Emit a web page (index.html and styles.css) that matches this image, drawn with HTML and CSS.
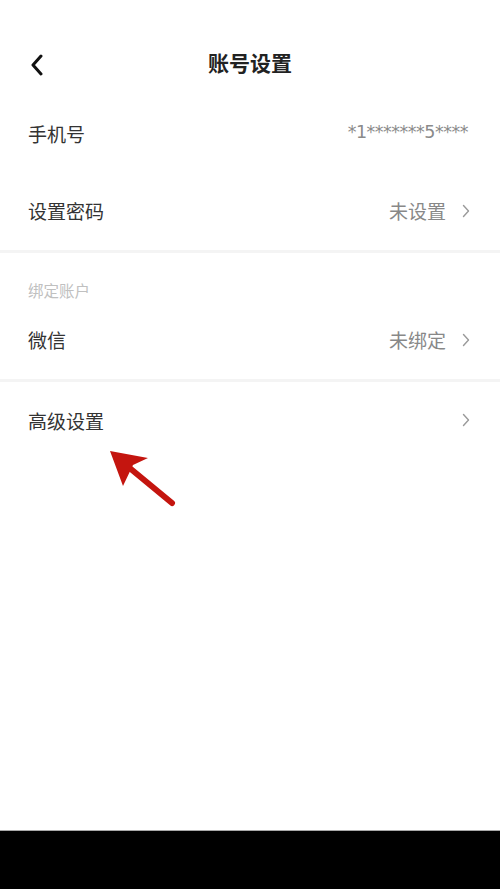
FILE: index.html
```html
<!DOCTYPE html>
<html lang="zh-CN">
<head>
<meta charset="utf-8">
<title>账号设置</title>
<link rel="stylesheet" href="styles.css">
</head>
<body>
<div class="page">
  <main class="content">
    <header class="header">
      <span class="back">
        <svg width="14" height="22" viewBox="0 0 14 22"><path d="M11 2 L3 11 L11 20" fill="none" stroke="#111" stroke-width="3" stroke-linecap="round" stroke-linejoin="round"/></svg>
      </span>
      <h1 class="title">账号设置</h1>
    </header>
    <div class="row">
      <span class="label">手机号</span>
      <span class="value phone">*1*******5****</span>
    </div>
    <div class="row row-b">
      <span class="label">设置密码</span>
      <span class="right"><span class="value">未设置</span><svg class="chev" width="8" height="14" viewBox="0 0 8 14"><path d="M1.5 1.5 L6.5 7 L1.5 12.5" fill="none" stroke="#9a9a9a" stroke-width="1.4" stroke-linecap="round" stroke-linejoin="round"/></svg></span>
    </div>
    <div class="divider"></div>
    <div class="section">绑定账户</div>
    <div class="row row-c">
      <span class="label">微信</span>
      <span class="right"><span class="value">未绑定</span><svg class="chev" width="8" height="14" viewBox="0 0 8 14"><path d="M1.5 1.5 L6.5 7 L1.5 12.5" fill="none" stroke="#9a9a9a" stroke-width="1.4" stroke-linecap="round" stroke-linejoin="round"/></svg></span>
    </div>
    <div class="divider"></div>
    <div class="row">
      <span class="label">高级设置</span>
      <span class="right"><svg class="chev" width="8" height="14" viewBox="0 0 8 14"><path d="M1.5 1.5 L6.5 7 L1.5 12.5" fill="none" stroke="#9a9a9a" stroke-width="1.4" stroke-linecap="round" stroke-linejoin="round"/></svg></span>
    </div>
    <svg class="arrow" width="80" height="70" viewBox="0 0 80 70">
      <path d="M62 60 L16 22" stroke="#c4150f" stroke-width="6" stroke-linecap="round" fill="none"/>
      <path d="M0 8 L38 15 L23 22 L13 43 Z" fill="#c4150f"/>
    </svg>
  </main>
  <footer class="bottom"></footer>
</div>
</body>
</html>
```
FILE: styles.css
```css
* { box-sizing: border-box; }
html, body { margin: 0; padding: 0; }
body {
  background: #000;
  font-family: "Noto Sans CJK SC", "Noto Sans", sans-serif;
}
.page {
  display: flex;
  flex-direction: column;
  height: 889px;
}
.content {
  position: relative;
  flex: 1;
  background: #fff;
}
.bottom {
  height: 59px;
  background: #000;
  border-top: 1px solid #a8a8a8;
}
.header {
  margin-top: 33px;
  height: 62px;
  padding-bottom: 4px;
  display: flex;
  align-items: center;
  justify-content: center;
  position: relative;
}
.back {
  position: absolute;
  left: 30px;
  top: 21px;
  display: flex;
}
.title {
  margin: 0;
  font-size: 21px;
  font-weight: 700;
  color: #222;
  line-height: 1;
}
.row {
  height: 78px;
  padding: 0 30px 2px 28px;
  display: flex;
  align-items: center;
  justify-content: space-between;
}
.row-b { height: 77px; }
.row-c { height: 77px; }
.label {
  font-size: 19px;
  color: #333;
  line-height: 1;
}
.right {
  display: flex;
  align-items: center;
  gap: 16px;
}
.value {
  font-size: 19px;
  color: #888;
  line-height: 1;
}
.phone {
  font-family: "DejaVu Sans", sans-serif;
  font-size: 17.5px;
  letter-spacing: -0.5px;
  color: #8a8a8a;
  margin-right: 2px;
}
.chev { display: block; }
.divider {
  height: 3px;
  background: #f4f4f4;
}
.section {
  padding: 27px 28px 2px;
  font-size: 15.5px;
  line-height: 20px;
  color: #c0c0c0;
}
.arrow {
  position: absolute;
  left: 110px;
  top: 443px;
}
```
